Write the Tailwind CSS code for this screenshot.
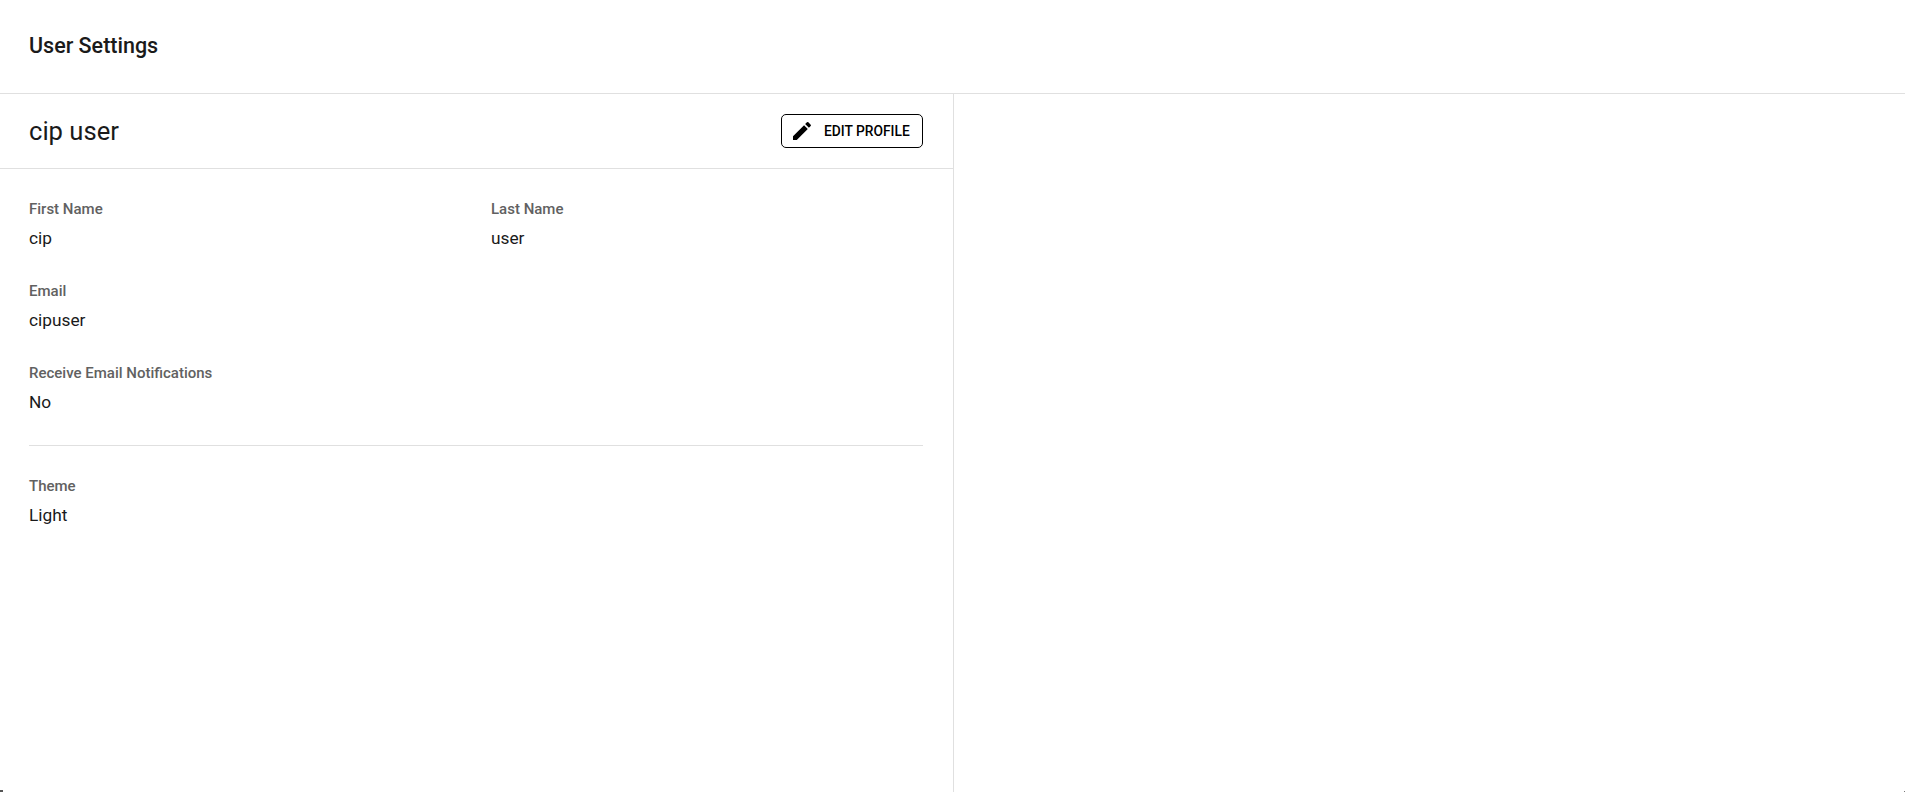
<!DOCTYPE html>
<html lang="en">
<head>
  <meta charset="UTF-8">
  <meta name="viewport" content="width=device-width, initial-scale=1.0">
  <script src="https://cdn.jsdelivr.net/npm/@tailwindcss/browser@4"></script>
  <title>User Settings</title>
</head>
<body class="relative bg-white h-screen overflow-hidden flex flex-col font-['Roboto',sans-serif] text-[#1a1a1a]">
  <header class="h-[94px] shrink-0 flex items-center pl-[29px] border-b border-[#e0e0e0]">
    <h1 class="text-[21.5px] font-medium">User Settings</h1>
  </header>
  <main class="flex flex-1 min-h-0">
    <section class="w-[954px] shrink-0 border-r border-[#e0e0e0]">
      <div class="h-[75px] flex items-center justify-between pl-[29px] pr-[30px] border-b border-[#e0e0e0]">
        <h2 class="text-[25.6px]">cip user</h2>
        <button class="w-[142px] h-[34px] flex items-center pl-[8px] border border-black rounded-[5px] bg-white text-black text-[13.8px] font-medium">
          <svg class="w-[24px] h-[24px] mr-[10px]" viewBox="0 0 24 24" fill="currentColor"><path d="M3 17.25V21h3.75L17.81 9.94l-3.75-3.75L3 17.25zM20.71 7.04c.39-.39.39-1.02 0-1.41l-2.34-2.34a.996.996 0 0 0-1.41 0l-1.83 1.83 3.75 3.75 1.83-1.83z"/></svg>
          EDIT PROFILE
        </button>
      </div>
      <div class="pt-[30px] pl-[29px] pr-[30px]">
        <div class="grid grid-cols-2 gap-x-[30px]">
          <div class="h-[82px]">
            <div class="text-[15px] font-medium text-[#616161] leading-[20px]">First Name</div>
            <div class="text-[17.3px] leading-[24px] mt-[7px]">cip</div>
          </div>
          <div class="h-[82px]">
            <div class="text-[15px] font-medium text-[#616161] leading-[20px]">Last Name</div>
            <div class="text-[17.3px] leading-[24px] mt-[7px]">user</div>
          </div>
        </div>
        <div class="h-[82px]">
          <div class="text-[15px] font-medium text-[#616161] leading-[20px]">Email</div>
          <div class="text-[17.3px] leading-[24px] mt-[7px]">cipuser</div>
        </div>
        <div class="h-[82px]">
          <div class="text-[15px] font-medium text-[#616161] leading-[20px]">Receive Email Notifications</div>
          <div class="text-[17.3px] leading-[24px] mt-[7px]">No</div>
        </div>
        <div class="border-t border-[#e0e0e0] pt-[30px]">
          <div class="text-[15px] font-medium text-[#616161] leading-[20px]">Theme</div>
          <div class="text-[17.3px] leading-[24px] mt-[7px]">Light</div>
        </div>
      </div>
    </section>
    <section class="flex-1"></section>
  </main>
  <span class="absolute left-0 bottom-0 w-[3px] h-[2px] bg-[#555]"></span>
  <span class="absolute right-0 bottom-0 w-[1px] h-[1px] bg-[#777]"></span>
</body>
</html>
